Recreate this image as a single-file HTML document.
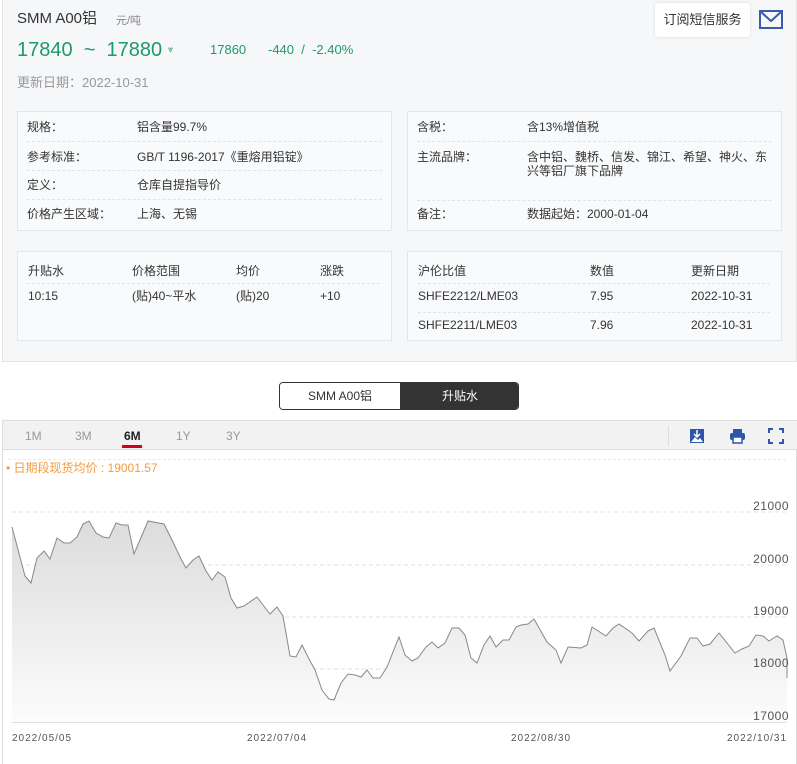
<!DOCTYPE html>
<html><head><meta charset="utf-8"><style>
*{margin:0;padding:0;box-sizing:border-box}
body{width:797px;height:764px;background:#fff;font-family:"Liberation Sans","Noto Sans CJK SC",sans-serif;color:#333;position:relative;overflow:hidden}
.a{position:absolute;white-space:nowrap}
.box{position:absolute;background:#f9fafb;border:1px solid #e6e6e6}
.t{font-size:12px;line-height:14px}
.sep{position:absolute;height:0;border-top:1px dashed #e3e3e3}
.g{color:#1e9a6a}
</style></head><body>
<div class="a" style="left:2px;top:0;width:795px;height:362px;background:#f6f7f9;border:1px solid #e5e5e5;border-top:none"></div>
<div class="a" style="left:17px;top:9px;font-size:15px;line-height:20px">SMM A00铝</div>
<div class="a" style="left:116px;top:12px;font-size:11px;color:#888">元/吨</div>
<div class="a g" style="left:17px;top:38px;font-size:20px;line-height:24px">17840 &nbsp;~ &nbsp;17880</div>
<div class="a g" style="left:168px;top:44px;font-size:9px">⩔</div>
<div class="a g" style="left:210px;top:42px;font-size:13px">17860</div>
<div class="a g" style="left:268px;top:42px;font-size:13px">-440 &nbsp;/ &nbsp;-2.40%</div>
<div class="a" style="left:17px;top:72px;font-size:13px;color:#999">更新日期：2022-10-31</div>
<div class="a" style="left:655px;top:3px;width:95px;height:34px;background:#fff;border-radius:3px;box-shadow:0 0 3px rgba(0,0,0,.12);font-size:13px;line-height:34px;text-align:center">订阅短信服务</div>
<svg class="a" style="left:759px;top:10px" width="24" height="20"><rect x="1" y="1" width="22" height="17" fill="none" stroke="#3a5bab" stroke-width="2"/><path d="M2 2 L12 11 L22 2" fill="none" stroke="#3a5bab" stroke-width="2"/></svg>

<div class="box" style="left:17px;top:111px;width:375px;height:120px"></div>
<div class="a t" style="left:27px;top:120px">规格：</div><div class="a t" style="left:137px;top:120px">铝含量99.7%</div>
<div class="sep" style="left:27px;top:141px;width:355px"></div>
<div class="a t" style="left:27px;top:150px">参考标准：</div><div class="a t" style="left:137px;top:150px">GB/T 1196-2017《重熔用铝锭》</div>
<div class="sep" style="left:27px;top:170px;width:355px"></div>
<div class="a t" style="left:27px;top:178px">定义：</div><div class="a t" style="left:137px;top:178px">仓库自提指导价</div>
<div class="sep" style="left:27px;top:199px;width:355px"></div>
<div class="a t" style="left:27px;top:207px">价格产生区域：</div><div class="a t" style="left:137px;top:207px">上海、无锡</div>

<div class="box" style="left:17px;top:251px;width:375px;height:90px"></div>
<div class="a t" style="left:28px;top:264px">升贴水</div><div class="a t" style="left:132px;top:264px">价格范围</div><div class="a t" style="left:236px;top:264px">均价</div><div class="a t" style="left:320px;top:264px">涨跌</div>
<div class="sep" style="left:27px;top:283px;width:353px"></div>
<div class="a t" style="left:28px;top:289px">10:15</div><div class="a t" style="left:132px;top:289px">(贴)40~平水</div><div class="a t" style="left:236px;top:289px">(贴)20</div><div class="a t" style="left:320px;top:289px">+10</div>

<div class="box" style="left:407px;top:111px;width:375px;height:120px"></div>
<div class="a t" style="left:417px;top:120px">含税：</div><div class="a t" style="left:527px;top:120px">含13%增值税</div>
<div class="sep" style="left:417px;top:141px;width:355px"></div>
<div class="a t" style="left:417px;top:150px">主流品牌：</div><div class="a t" style="left:527px;top:150px;white-space:normal;width:245px;line-height:14px">含中铝、魏桥、信发、锦江、希望、神火、东兴等铝厂旗下品牌</div>
<div class="sep" style="left:417px;top:200px;width:355px"></div>
<div class="a t" style="left:417px;top:207px">备注：</div><div class="a t" style="left:527px;top:207px">数据起始：2000-01-04</div>

<div class="box" style="left:407px;top:251px;width:375px;height:90px"></div>
<div class="a t" style="left:418px;top:264px">沪伦比值</div><div class="a t" style="left:590px;top:264px">数值</div><div class="a t" style="left:691px;top:264px">更新日期</div>
<div class="sep" style="left:418px;top:283px;width:352px"></div>
<div class="a t" style="left:418px;top:289px">SHFE2212/LME03</div><div class="a t" style="left:590px;top:289px">7.95</div><div class="a t" style="left:691px;top:289px">2022-10-31</div>
<div class="sep" style="left:418px;top:312px;width:352px"></div>
<div class="a t" style="left:418px;top:318px">SHFE2211/LME03</div><div class="a t" style="left:590px;top:318px">7.96</div><div class="a t" style="left:691px;top:318px">2022-10-31</div>

<div class="a" style="left:279px;top:382px;width:240px;height:28px;border:1px solid #333;border-radius:4px;overflow:hidden;font-size:12px;line-height:26px">
<div class="a" style="left:0;top:0;width:120px;height:26px;background:#fff;text-align:center">SMM A00铝</div>
<div class="a" style="left:120px;top:0;width:120px;height:26px;background:#333;color:#fff;text-align:center">升贴水</div></div>

<div class="a" style="left:2px;top:420px;width:795px;height:344px;border:1px solid #ddd;border-bottom:none"></div>
<div class="a" style="left:3px;top:421px;width:794px;height:29px;background:#f2f2f2;border-bottom:1px solid #ddd"></div>
<div class="a t" style="left:25px;top:429px;color:#999">1M</div>
<div class="a t" style="left:75px;top:429px;color:#999">3M</div>
<div class="a t" style="left:124px;top:429px;color:#222;font-weight:bold">6M</div>
<div class="a" style="left:122px;top:445px;width:20px;height:3px;background:#d0021b"></div>
<div class="a t" style="left:176px;top:429px;color:#999">1Y</div>
<div class="a t" style="left:226px;top:429px;color:#999">3Y</div>
<div class="a" style="left:668px;top:426px;width:1px;height:20px;background:#ddd"></div>
<svg class="a" style="left:689px;top:428px" width="16" height="16"><rect x="1" y="1" width="14" height="14" fill="#2d56a8"/><path d="M2 14 L6 9 L9 12 L11 10 L14 14Z" fill="#fff"/><path d="M8 2 V8 M5 6 L8 9 L11 6" stroke="#fff" stroke-width="1.5" fill="none"/></svg>
<svg class="a" style="left:729px;top:428px" width="17" height="16"><rect x="4" y="1" width="9" height="4" fill="#2d56a8"/><rect x="1" y="5" width="15" height="7" rx="2" fill="#2d56a8"/><rect x="4" y="9" width="9" height="6" fill="#fff" stroke="#2d56a8" stroke-width="1.5"/></svg>
<svg class="a" style="left:768px;top:428px" width="16" height="16"><path d="M1 5V1H5 M11 1H15V5 M15 11V15H11 M5 15H1V11" stroke="#2d56a8" stroke-width="2" fill="none"/></svg>
<div class="sep" style="left:8px;top:459px;width:778px;border-color:#e8e8e8"></div>
<div class="a t" style="left:6px;top:461px;color:#f39c3c">• 日期段现货均价 : 19001.57</div>

<svg class="a" style="left:0;top:490px" width="797" height="274">
<defs><linearGradient id="gr" x1="0" y1="0" x2="0" y2="1"><stop offset="0" stop-color="#dcdcdc"/><stop offset="1" stop-color="#fcfcfc"/></linearGradient></defs>
<g stroke="#e2e2e2" stroke-dasharray="4,3"><line x1="12" x2="787" y1="22" y2="22"/><line x1="12" x2="787" y1="75" y2="75"/><line x1="12" x2="787" y1="127" y2="127"/><line x1="12" x2="787" y1="179" y2="179"/></g>
<g transform="translate(0,-490)">
<path d="M12,527 L25,576 L31,583 L37,558 L44,551 L50,559 L57,538 L64,543 L70,543 L77,537 L83,524 L89,521 L96,533 L103,537 L109,538 L116,523 L122,525 L128,525 L134,554 L148,521 L164,524 L172,540 L181,559 L186,568 L193,560 L199,556 L206,571 L212,580 L218,572 L225,577 L231,598 L237,608 L244,606 L257,597 L263,605 L270,614 L277,607 L283,616 L290,656 L296,657 L302,645 L309,659 L315,670 L322,690 L329,699 L334,700 L341,683 L348,674 L355,675 L361,677 L367,670 L373,678 L380,678 L387,667 L399,637 L405,655 L412,661 L418,658 L426,647 L432,642 L438,648 L445,643 L452,628 L459,628 L465,635 L471,658 L477,663 L484,645 L490,636 L496,647 L503,640 L509,640 L516,627 L521,625 L528,624 L534,619 L547,642 L556,650 L561,663 L568,647 L581,648 L587,645 L592,627 L606,636 L613,628 L619,624 L632,633 L639,641 L648,631 L654,628 L665,655 L670,671 L681,656 L690,638 L697,638 L703,646 L710,644 L719,633 L735,653 L742,649 L749,646 L756,635 L763,636 L769,641 L777,636 L783,640 L787,658 L787,678 L787,722 L12,722Z" fill="url(#gr)"/>
<path d="M12,527 L25,576 L31,583 L37,558 L44,551 L50,559 L57,538 L64,543 L70,543 L77,537 L83,524 L89,521 L96,533 L103,537 L109,538 L116,523 L122,525 L128,525 L134,554 L148,521 L164,524 L172,540 L181,559 L186,568 L193,560 L199,556 L206,571 L212,580 L218,572 L225,577 L231,598 L237,608 L244,606 L257,597 L263,605 L270,614 L277,607 L283,616 L290,656 L296,657 L302,645 L309,659 L315,670 L322,690 L329,699 L334,700 L341,683 L348,674 L355,675 L361,677 L367,670 L373,678 L380,678 L387,667 L399,637 L405,655 L412,661 L418,658 L426,647 L432,642 L438,648 L445,643 L452,628 L459,628 L465,635 L471,658 L477,663 L484,645 L490,636 L496,647 L503,640 L509,640 L516,627 L521,625 L528,624 L534,619 L547,642 L556,650 L561,663 L568,647 L581,648 L587,645 L592,627 L606,636 L613,628 L619,624 L632,633 L639,641 L648,631 L654,628 L665,655 L670,671 L681,656 L690,638 L697,638 L703,646 L710,644 L719,633 L735,653 L742,649 L749,646 L756,635 L763,636 L769,641 L777,636 L783,640 L787,658 L787,678" fill="none" stroke="#888" stroke-width="1"/>
<line x1="12" x2="787" y1="722.5" y2="722.5" stroke="#e0e0e0"/>
</g>
<g font-family="Liberation Sans,sans-serif" font-size="12" fill="#555" letter-spacing="0.5" text-anchor="end">
<text x="789" y="20">21000</text><text x="789" y="73">20000</text><text x="789" y="125">19000</text><text x="789" y="177">18000</text><text x="789" y="230">17000</text></g>
<g font-family="Liberation Sans,sans-serif" font-size="10" fill="#555" letter-spacing="1">
<text x="12" y="251">2022/05/05</text><text x="247" y="251">2022/07/04</text><text x="511" y="251">2022/08/30</text><text x="727" y="251">2022/10/31</text></g>
</svg>
</body></html>
